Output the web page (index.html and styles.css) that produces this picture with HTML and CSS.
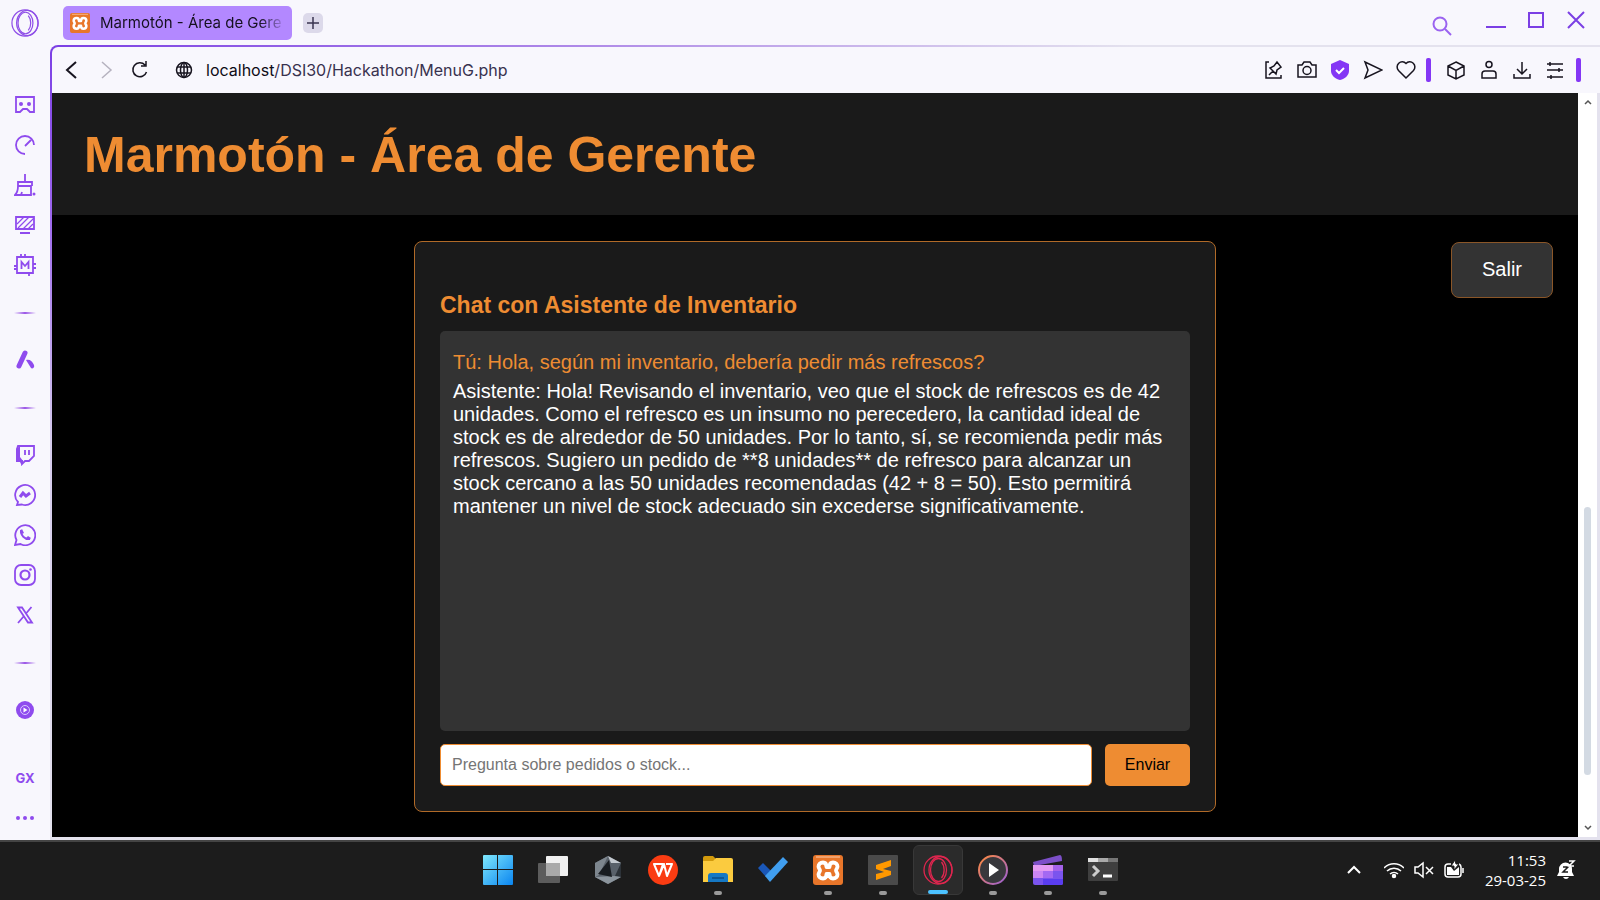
FILE: index.html
```
<!DOCTYPE html>
<html lang="es">
<head>
    <meta charset="UTF-8">
    <meta name="viewport" content="width=device-width, initial-scale=1.0">
    <title>Marmotón - Área de Gerente</title>
    <link rel="stylesheet" href="styles.css">
</head>
<body>
    <!-- Símbolos compartidos -->
    <svg width="0" height="0" class="defs" aria-hidden="true">
        <defs>
            <symbol id="xampp" viewBox="0 0 30 30">
                <rect width="30" height="30" rx="3" fill="#e8762a"/>
                <path d="M3 2h24" stroke="#f5b183" stroke-width="1.500"/>
                <path d="M10 7.500c3 0 3.500 2 3.500 4.500h3c0-2.500.500-4.500 3.500-4.500 2.800 0 4.500 1.800 4.500 4 0 1.800-1.500 2.500-1.500 4s1.500 2.200 1.500 4c0 2.200-1.700 4-4.500 4-3 0-3.500-2-3.500-4.500h-3c0 2.500-.500 4.500-3.500 4.500-2.800 0-4.500-1.800-4.500-4 0-1.800 1.500-2.500 1.500-4s-1.500-2.200-1.500-4c0-2.200 1.700-4 4.500-4z" fill="none" stroke="#fff" stroke-width="3.800" stroke-linejoin="round"/>
            </symbol>
            <symbol id="opera" viewBox="0 0 30 30">
                <g fill="none" stroke="currentColor" stroke-width="1.300">
                    <circle cx="15" cy="15" r="14"/>
                    <ellipse cx="17.500" cy="15" rx="11.500" ry="13.500"/>
                    <ellipse cx="15.500" cy="15" rx="8" ry="11.500"/>
                    <path d="M18.500 7c3.500 4 3.500 12 0 16"/>
                </g>
            </symbol>
        </defs>
    </svg>

    <div class="browser">
        <!-- Barra de pestañas -->
        <header class="tabbar">
            <button class="opera-btn" aria-label="Menú"><svg width="28" height="28"><use href="#opera"/></svg></button>
            <div class="tab">
                <svg width="20" height="20"><use href="#xampp"/></svg>
                <span>Marmotón - Área de Gere</span>
            </div>
            <button class="new-tab" aria-label="Nueva pestaña"><svg width="12" height="12" viewBox="0 0 12 12"><path d="M6 0v12M0 6h12"/></svg></button>
            <div class="window-controls">
                <button aria-label="Buscar" class="search"><svg width="20" height="20" viewBox="0 0 20 20"><circle cx="8" cy="8" r="6.500"/><path d="M13 13l6 6"/></svg></button>
                <button aria-label="Minimizar"><svg width="20" height="20" viewBox="0 0 20 20"><path d="M0 17h20"/></svg></button>
                <button aria-label="Maximizar"><svg width="20" height="20" viewBox="0 0 20 20"><path d="M3 3h14v14H3z"/></svg></button>
                <button aria-label="Cerrar"><svg width="20" height="20" viewBox="0 0 20 20"><path d="M2 2l16 16M18 2L2 18"/></svg></button>
            </div>
        </header>

        <div class="middle">
            <!-- Barra lateral -->
            <nav class="sidebar">
                <a href="#" aria-label="Mods"><svg viewBox="0 0 22 22"><path d="M2 3h18v15h-4l-3-3H9l-3 3H2z"/><circle cx="7" cy="10" r="2" class="solid"/><circle cx="15" cy="10" r="2" class="solid"/></svg></a>
                <a href="#" aria-label="GX Control"><svg viewBox="0 0 22 22"><path d="M11 20a9 9 0 1 1 9-9M11 12l6-6"/></svg></a>
                <a href="#" aria-label="GX Cleaner"><svg viewBox="0 0 22 22"><path d="M11 0v7M4 12V8h14v4M4 12h13v9H1c2-2 3-5 3-9zM7 21l1-3"/><circle cx="20" cy="20" r="1.500" class="solid"/></svg></a>
                <a href="#" aria-label="Fondos"><svg viewBox="0 0 22 22"><path d="M2 3h18v12H2zM6 19h10"/><path d="M3 10l7-7M4 14L15 3M9 15L20 4M14 15l5-5" stroke-width="1.200"/></svg></a>
                <a href="#" aria-label="Memoria"><svg viewBox="0 0 22 22"><path d="M3 3h16v16H3zM7 0v3M11 0v3M0 12h3M0 15h3M19 10h3M19 14h3M15 19v3"/><path d="M7.500 15V8l3.500 4 3.500-4v7"/></svg></a>
                <hr>
                <a href="#" aria-label="Aria"><svg viewBox="0 0 22 22"><path d="M11 4L5 17" stroke-width="5" stroke-linecap="round"/><path d="M12 11c4-1 6 1 8 5 1 3-2 4-3 3z" class="solid"/></svg></a>
                <hr>
                <a href="#" aria-label="Twitch"><svg viewBox="0 0 22 22"><path d="M4 2h16v10l-5 5h-4l-3 3v-3H3V5z"/><path d="M2 5l4-3v11l3 4v3H7l-1-2H2z" class="solid"/><path d="M11 6v5M15 6v5"/></svg></a>
                <a href="#" aria-label="Messenger"><svg viewBox="0 0 22 22"><path d="M4 18a10 10 0 1 1 4 2.500L3 21z"/><path d="M6 13l3-4 3 3 4-3" stroke-width="3"/></svg></a>
                <a href="#" aria-label="WhatsApp"><svg viewBox="0 0 22 22"><path d="M2.500 16a10 10 0 1 1 4 4L1 21z"/><path d="M7 6c-1 5 4 10 9 9"/><path d="M6 7l2-2 2 4-2 1zM12 14l2-2 3 2-2 2z" class="solid"/></svg></a>
                <a href="#" aria-label="Instagram"><svg viewBox="0 0 22 22"><rect x="1" y="1" width="20" height="20" rx="6"/><circle cx="11" cy="11" r="4.500" stroke-width="2.200"/><circle cx="16.500" cy="5.500" r="1.300" class="solid"/></svg></a>
                <a href="#" aria-label="X"><svg viewBox="0 0 22 22"><path d="M4 3.500h4l10 15h-4zM17.500 3L12 9.500M4 19l6-7"/></svg></a>
                <hr>
                <a href="#" aria-label="Reproductor"><svg viewBox="0 0 22 22"><circle cx="11" cy="11" r="9" class="solid"/><circle cx="11" cy="11" r="4.500" stroke="#d9c8ff" stroke-width="1"/><path d="M9.500 8.500l4 2.500-4 2.500z" fill="#fff" stroke="none"/></svg></a>
                <a href="#" class="gx">GX</a>
                <a href="#" aria-label="Más"><svg viewBox="0 0 22 22"><g class="solid"><circle cx="4" cy="11" r="2"/><circle cx="11" cy="11" r="2"/><circle cx="18" cy="11" r="2"/></g></svg></a>
            </nav>

            <div class="content">
                <!-- Barra de direcciones -->
                <div class="toolbar">
                    <button aria-label="Atrás"><svg viewBox="0 0 20 20"><path d="M14 2l-9 8 9 8" stroke-width="2"/></svg></button>
                    <button aria-label="Adelante" class="disabled"><svg viewBox="0 0 20 20"><path d="M6 2l9 8-9 8"/></svg></button>
                    <button aria-label="Recargar"><svg viewBox="0 0 20 20"><path d="M15 5a7 7 0 1 0 1.500 7M16 1v5h-5"/></svg></button>
                    <div class="address">
                        <svg viewBox="0 0 20 20" width="20" height="20"><circle cx="10" cy="10" r="7.500"/><ellipse cx="10" cy="10" rx="3.500" ry="7.500"/><path d="M3 7h14M3 13h14M10 2v16"/></svg>
                        <span class="url"><b>localhost</b>/DSI30/Hackathon/MenuG.php</span>
                    </div>
                    <div class="actions">
                        <button aria-label="Fijar"><svg viewBox="0 0 20 20"><path d="M5 2H2v16h15v-3M5 15l4-4M6 8l6 6 1-4 4-3-4-5-3 4z"/></svg></button>
                        <button aria-label="Captura"><svg viewBox="0 0 20 20"><path d="M1 5h4l2-3h6l2 3h4v12H1z"/><circle cx="10" cy="10.500" r="4"/></svg></button>
                        <button aria-label="Bloqueador"><svg viewBox="0 0 20 20"><path d="M10 0l9 4v7c0 4-4 8-9 9-5-1-9-5-9-9V4z" fill="#8436f5" stroke="none"/><path d="M6 10l3 3 5-5" stroke="#fff" stroke-width="2"/></svg></button>
                        <button aria-label="Flow"><svg viewBox="0 0 20 20"><path d="M2 2l17 8-17 8 3-8z"/></svg></button>
                        <button aria-label="Favoritos"><svg viewBox="0 0 20 20"><path d="M10 18L2.500 10.500a5 5 0 0 1 7.500-7 5 5 0 0 1 7.500 7z"/></svg></button>
                        <i class="bar"></i>
                        <button aria-label="Extensiones"><svg viewBox="0 0 20 20"><path d="M10 2l8 4v9l-8 4-8-4V6zM2 6l8 4.500L18 6M10 10.500V19"/></svg></button>
                        <button aria-label="Perfil"><svg viewBox="0 0 20 20"><circle cx="10" cy="4.500" r="3"/><path d="M3 18v-4c0-2 1-3 3-3h8c2 0 3 1 3 3v4z"/></svg></button>
                        <button aria-label="Descargas"><svg viewBox="0 0 20 20"><path d="M10 2v12M5 9l5 5 5-5M2 14v4h16v-4"/></svg></button>
                        <button aria-label="Configuración"><svg viewBox="0 0 20 20"><path d="M2 4h16M2 10h16M2 17h16M5 2v4M14 8v4M6 15v4"/></svg></button>
                        <i class="bar"></i>
                    </div>
                </div>

                <div class="viewport">
                    <!-- Página -->
                    <div class="page">
                        <div class="page-header">
                            <h1>Marmotón - Área de Gerente</h1>
                        </div>
                        <main>
                            <section class="chat">
                                <h2>Chat con Asistente de Inventario</h2>
                                <div class="messages">
                                    <p class="user">Tú: Hola, según mi inventario, debería pedir más refrescos?</p>
                                    <p>Asistente: Hola! Revisando el inventario, veo que el stock de refrescos es de 42 unidades. Como el refresco es un insumo no perecedero, la cantidad ideal de stock es de alrededor de 50 unidades. Por lo tanto, sí, se recomienda pedir más refrescos. Sugiero un pedido de **8 unidades** de refresco para alcanzar un stock cercano a las 50 unidades recomendadas (42 + 8 = 50). Esto permitirá mantener un nivel de stock adecuado sin excederse significativamente.</p>
                                </div>
                                <form class="ask">
                                    <input type="text" placeholder="Pregunta sobre pedidos o stock..." aria-label="Pregunta">
                                    <button type="button">Enviar</button>
                                </form>
                            </section>
                            <a href="#" class="logout">Salir</a>
                        </main>
                    </div>
                    <div class="scrollbar">
                        <svg width="8" height="6" viewBox="0 0 8 6"><path d="M1 5l3-3 3 3"/></svg>
                        <div class="track"><div class="thumb"></div></div>
                        <svg width="8" height="6" viewBox="0 0 8 6"><path d="M1 1l3 3 3-3"/></svg>
                    </div>
                </div>
            </div>
        </div>
    </div>

    <!-- Barra de tareas -->
    <footer class="taskbar">
        <div class="apps">
            <button aria-label="Inicio"><svg viewBox="0 0 30 30"><defs><linearGradient id="win" gradientUnits="userSpaceOnUse" x1="0" y1="0" x2="30" y2="30"><stop stop-color="#7fe8fd"/><stop offset="1" stop-color="#0a85f0"/></linearGradient></defs><path fill="url(#win)" d="M0 1q0-1 1-1h13v14H0zM15 0h14q1 0 1 1v13H15zM0 15h14v15H1q-1 0-1-1zM15 15h15v14q0 1-1 1H15z"/></svg></button>
            <button aria-label="Vista de tareas"><svg viewBox="0 0 30 30"><rect x="8" y="1" width="22" height="20" rx="1" fill="#f0f0f0"/><rect x="0" y="8" width="22" height="20" rx="1" fill="#5c5c5c"/><path d="M8 8h14v13H8z" fill="#a9a9a9"/></svg></button>
            <button aria-label="Editor 3D"><svg viewBox="0 0 30 30"><path d="M15 1l13 7v14l-13 7-13-7V8z" fill="#59616a"/><path d="M15 1l13 7-10 0z" fill="#c4cad0"/><path d="M28 8v14l-6-1z" fill="#2c3238"/><path d="M2 22l13 7 13-7-7-1z" fill="#8b949c"/><path d="M15 1L2 8v14l4-2z" fill="#7d868e"/><path d="M16 5L5 19l14 3z" fill="#181c20"/></svg></button>
            <button aria-label="WPS Office"><svg viewBox="0 0 30 30"><circle cx="15" cy="15" r="15" fill="#fa3c12"/><path d="M6 9h9l-4 12zM11 21l5-12 3 12 5-12h-6" fill="none" stroke="#fff" stroke-width="2" stroke-linejoin="round"/></svg></button>
            <button aria-label="Explorador" class="open"><svg viewBox="0 0 30 30"><path d="M0 3q0-2 2-2h8l3 3v4H0z" fill="#d29a0c"/><path d="M0 6h10l3-3h15q2 0 2 2v22H0z" fill="#fbcb3f"/><path d="M5 27v-6q0-3 3-3h14q3 0 3 3v6z" fill="#1678c4"/><path d="M9 23h12" stroke="#0b4e88" stroke-width="1.500"/></svg></button>
            <button aria-label="To Do"><svg viewBox="0 0 30 30"><path d="M0 13l5-5 8 8-5 6z" fill="#1a57b8"/><path d="M7 21L25 2l5 5-18 20z" fill="#409eef"/></svg></button>
            <button aria-label="XAMPP" class="open"><svg viewBox="0 0 30 30"><use href="#xampp"/></svg></button>
            <button aria-label="Sublime Text" class="open"><svg viewBox="0 0 30 30"><rect width="30" height="30" rx="1" fill="#4a4a4a"/><path d="M8 10l15-5v6l-8 3 8 2v4L8 25v-6l8-2-8-3z" fill="#ff9800"/></svg></button>
            <button aria-label="Opera GX" class="open active"><svg viewBox="0 0 30 30"><use href="#opera"/></svg></button>
            <button aria-label="Reproductor multimedia" class="open"><svg viewBox="0 0 30 30"><defs><linearGradient id="ring" x2="1" y2="1"><stop stop-color="#ff8a3c"/><stop offset="1" stop-color="#9a5fd8"/></linearGradient></defs><circle cx="15" cy="15" r="14" fill="#38383c" stroke="url(#ring)" stroke-width="2"/><path d="M11 8l10 7-10 7z" fill="#fff"/></svg></button>
            <button aria-label="Clipchamp" class="open"><svg viewBox="0 0 30 30"><path d="M0 7L27 0q2 0 2 6L1 11z" fill="#7c4fc8"/><path d="M0 10h30v18q0 2-2 2H2q-2 0-2-2z" fill="#7b54ee"/><path d="M0 10h20v6H0z" fill="#e39af2"/><path d="M0 16h10v7H0z" fill="#cc86f4"/><path d="M10 16h10v7H10z" fill="#a469f2"/><path d="M20 10h10v6H20z" fill="#a562ea"/><path d="M10 24h20v4q0 2-2 2H10z" fill="#5a3df0"/></svg></button>
            <button aria-label="Terminal" class="open"><svg viewBox="0 0 30 30"><rect y="3" width="30" height="23" rx="1" fill="#3f3f3f"/><path d="M0 3h10v4H0z" fill="#e0e0e0"/><path d="M10 3h10v4H10z" fill="#a9a9a9"/><path d="M20 3h10v4H20z" fill="#757575"/><path d="M5 11l5 5-5 5" fill="none" stroke="#ccc" stroke-width="3"/><path d="M15 21h9" stroke="#fff" stroke-width="3"/></svg></button>
        </div>
        <div class="tray">
            <svg viewBox="0 0 20 20"><path d="M4 13l6-6 6 6" stroke-width="2"/></svg>
            <svg viewBox="0 0 20 20" class="wifi"><path d="M0 8a14 14 0 0 1 20 0M3 11a10 10 0 0 1 14 0M6 14a6 6 0 0 1 8 0"/><circle cx="10" cy="16" r="1.500" fill="#fff"/></svg>
            <svg viewBox="0 0 20 20"><path d="M1 7h3l5-4v14l-5-4H1zM12 7l7 7M19 7l-7 7"/></svg>
            <svg viewBox="0 0 20 20"><path d="M7 4H4q-3 0-3 3v7q0 3 3 3h10q3 0 3-3V7q0-2-2-3M19 8v5"/><path d="M3 7h4l3 4 5-4v8H3z" fill="#fff" stroke="none"/><path d="M11 0L7 6h3v4l5-6h-3z" fill="#fff" stroke="#1c1c1c" stroke-width="1"/></svg>
            <time>11:53<br>29-03-25</time>
            <svg viewBox="0 0 20 20" class="bell"><path d="M1 16h17l-2-4V9A6 6 0 0 0 3 9v3zM7 17h6q-1 2-3 2t-3-2z" fill="#fff"/><path d="M7 7h5l-5 5h5" stroke="#1c1c1c" stroke-width="1.500"/><path d="M13 1h5l-5 5h5" stroke="#fff" stroke-width="1.500"/></svg>
        </div>
    </footer>
</body>
</html>
```
FILE: styles.css
```
* { box-sizing: border-box; }

body {
    margin: 0;
    min-height: 100vh;
    display: flex;
    flex-direction: column;
    background: #f8f7fd;
    font-family: "Liberation Sans", Arial, sans-serif;
}

.defs { position: absolute; }

svg { display: block; flex: none; fill: none; stroke-width: 1.5; }

a { text-decoration: none; }

button {
    border: none;
    background: none;
    padding: 0;
    display: flex;
    align-items: center;
    justify-content: center;
}

/* Navegador */
.browser {
    flex: 1;
    display: flex;
    flex-direction: column;
}

.tabbar {
    height: 45px;
    display: flex;
    align-items: center;
    padding: 0 14px 0 11px;
}

.opera-btn { color: #8f4fe8; }

.tab {
    width: 229px;
    height: 34px;
    margin: 0 11px 0 24px;
    padding: 0 7px;
    display: flex;
    align-items: center;
    gap: 10px;
    border-radius: 5px;
    background: #b388ff;
    font: 15px Inter, sans-serif;
    color: #15101f;
}

.tab span {
    white-space: nowrap;
    -webkit-mask-image: linear-gradient(to right, #000 88%, rgba(0, 0, 0, 0.2));
    mask-image: linear-gradient(to right, #000 88%, rgba(0, 0, 0, 0.2));
}

.new-tab {
    width: 20px;
    height: 20px;
    border-radius: 5px;
    background: #dcd9ea;
    stroke: #3a3550;
}

.window-controls {
    margin-left: auto;
    height: 39px;
    align-self: flex-start;
    display: flex;
    align-items: center;
    gap: 20px;
    stroke: #7b3fe4;
}

.search { margin-right: 14px; padding-top: 12px; stroke: #9b63f0; }

.window-controls svg { stroke-width: 2; }

.middle { flex: 1; display: flex; }

.sidebar {
    width: 50px;
    padding: 40px 0 2px;
    display: flex;
    flex-direction: column;
    align-items: center;
    color: #8f4bee;
    stroke: #8f4bee;
}

.sidebar a {
    height: 40px;
    display: flex;
    align-items: center;
    color: inherit;
}

.sidebar svg { width: 22px; height: 22px; stroke-width: 1.8; }

.solid { fill: #8f4bee; stroke: none; }

.sidebar hr {
    width: 22px;
    height: 2px;
    margin: 27px 0 26px;
    border: none;
    background: linear-gradient(to right, transparent, #9a55e6, transparent);
}

.sidebar .gx {
    margin-top: auto;
    font: bold 13px Inter, sans-serif;
}

.content {
    flex: 1;
    min-width: 0;
    display: flex;
    flex-direction: column;
    padding: 2px 0 0 2px;
    border-radius: 8px 0 0 0;
    background:
        linear-gradient(to right, #7b3fe4, #b08be8 35%, #e4e2ee 70%) top / 100% 2px no-repeat,
        linear-gradient(to bottom, #7b3fe4, #9a63ee 20%, #d6ccee 50%, #e4e2ee) left / 8px 100% no-repeat,
        #e4e2ee;
}

.toolbar {
    height: 46px;
    display: flex;
    align-items: center;
    gap: 14px;
    padding: 0 16px 0 10px;
    border-radius: 6px 0 0 0;
    background: #f8f7fd;
    stroke: #17141f;
}

.toolbar button svg { width: 20px; height: 20px; }

.disabled { stroke: #b5b2bf; }

.address {
    flex: 1;
    display: flex;
    align-items: center;
    gap: 12px;
    margin-left: 10px;
    color: #38324f;
    font: 16px Inter, sans-serif;
}

.url b { font-weight: 400; color: #0e0b16; }

.actions { display: flex; align-items: center; gap: 13px; }

.bar {
    width: 5px;
    height: 24px;
    margin: 0 2px 0 -3px;
    border-radius: 2px;
    background: #8436f5;
}

.bar:last-child { margin: 0 3px 0 -2px; }

.viewport {
    flex: 1;
    display: flex;
    padding: 0 3px 3px 0;
}

/* Página */
.page {
    flex: 1;
    min-width: 0;
    background: #000;
    color: #fff;
    font-size: 20px;
    line-height: 23px;
}

.page-header {
    padding: 33px 32px 31px;
    background: #1a1a1a;
}

h1 {
    margin: 0;
    font-size: 50px;
    line-height: 58px;
    color: #ee8c32;
}

main {
    display: grid;
    grid-template-columns: 1fr minmax(0, 802px) 1fr;
    align-items: start;
    padding: 26px 25px 20px;
}

.chat {
    grid-column: 2;
    padding: 50px 25px 25px;
    border: 1px solid #b06a28;
    border-radius: 8px;
    background: #1a1a1a;
}

h2 {
    margin: 0 0 13px;
    font-size: 23px;
    line-height: 26px;
    color: #ee8c32;
}

.messages {
    height: 400px;
    overflow: auto;
    padding: 14px 13px;
    border-radius: 5px;
    background: #333;
}

.messages p { margin: 6px 0; }

.user { color: #ee8c32; }

.ask {
    display: flex;
    gap: 13px;
    margin-top: 13px;
}

.ask input {
    flex: 1;
    min-width: 0;
    height: 42px;
    padding: 0 11px;
    border: 1px solid #ee8c32;
    border-radius: 5px;
    background: #fff;
    font: 16px "Liberation Sans", Arial, sans-serif;
}

.ask button {
    width: 85px;
    border-radius: 5px;
    background: #ee8c32;
    color: #000;
    font: 16px "Liberation Sans", Arial, sans-serif;
}

.logout {
    justify-self: end;
    margin-top: 1px;
    padding: 15px 30px 16px;
    border: 1px solid #8a5628;
    border-radius: 8px;
    background: #333;
    color: #fff;
}

/* Barra de desplazamiento */
.scrollbar {
    width: 19px;
    display: flex;
    flex-direction: column;
    align-items: center;
    padding: 6px 0;
    background: #fff;
    stroke: #555;
}

.track {
    flex: 1;
    width: 7px;
    display: grid;
    grid-template-rows: 400fr 266fr 50fr;
}

.thumb {
    grid-row: 2;
    border-radius: 4px;
    background: #d3dae3;
}

/* Barra de tareas */
.taskbar {
    height: 60px;
    display: grid;
    grid-template-columns: 1fr auto 1fr;
    align-items: center;
    padding-bottom: 2px;
    border-top: 2px solid #444;
    background: #1c1c1c;
}

.apps { grid-column: 2; display: flex; gap: 5px; }

.apps button {
    position: relative;
    width: 50px;
    height: 50px;
    border-radius: 6px;
}

.apps svg { width: 30px; height: 30px; }

.apps .open::after {
    content: "";
    position: absolute;
    bottom: 0;
    width: 8px;
    height: 4px;
    border-radius: 2px;
    background: #9a9a9a;
}

.apps .active {
    border: 1px solid #383838;
    background: #2b2b2b;
    color: #e0264f;
}

.apps .active::after { width: 20px; background: #4cc2ff; }

.tray {
    justify-self: end;
    display: flex;
    align-items: center;
    gap: 10px;
    padding-right: 24px;
    stroke: #fff;
    color: #fff;
}

.tray svg { width: 20px; height: 20px; }

.wifi { margin-left: 10px; }

.tray time {
    margin-left: 11px;
    text-align: right;
    font: 15px/20px "Open Sans", sans-serif;
}

.tray .bell { stroke: none; }
```
